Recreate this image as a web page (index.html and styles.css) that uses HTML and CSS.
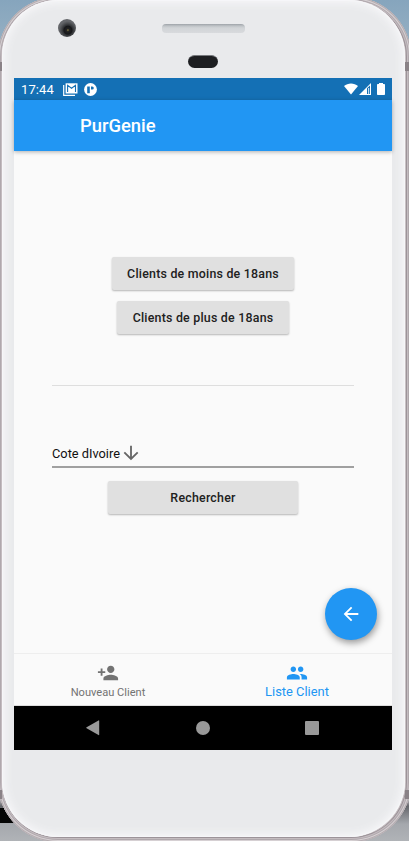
FILE: index.html
```html
<!DOCTYPE html>
<html lang="fr">
<head>
<meta charset="utf-8">
<title>PurGenie</title>
<link rel="stylesheet" href="styles.css">
</head>
<body>
<div class="backdrop"></div>
<div class="casing">
  <i class="band band-tl"></i><i class="band band-tr"></i><i class="band band-bl"></i><i class="band band-br"></i>
  <div class="face">
    <div class="bezel">
      <span class="camera"></span>
      <span class="speaker"></span>
      <span class="sensor"></span>
    </div>
    <div class="screen">
      <div class="status">
        <span class="time">17:44</span>
        <svg class="gmail" width="15" height="13" viewBox="0 0 15 13"><path d="M.7 2v10.300H12" fill="none" stroke="#fff" stroke-width="1.200"/><path fill="#fff" d="M2.600.3h11.900v10.200H2.600z"/><path d="M4.600 9V2.300l3.950 3 3.950-3V9" fill="none" stroke="#1470b5" stroke-width="1.100"/></svg>
        <svg class="app" width="13" height="13" viewBox="0 0 13 13"><circle cx="6.500" cy="6.500" r="6.400" fill="#fff"/><path fill="#1470b5" d="M3.200 3.500h2.600v6.800H3.200zM7 3.500h1.200q1.600 0 1.600 1.500t-1.600 1.500H7z"/></svg>
        <span class="spacer"></span>
        <svg width="14" height="12" viewBox="0 0 14 12"><path fill="#fff" d="M0 3C3.800-.4 10.200-.4 14 3L7 11.500z"/></svg>
        <svg class="signal" width="12" height="12" viewBox="0 0 12 12"><path fill="#fff" d="M0 12 12 0v12z"/><path fill="#1470b5" d="M8 5.200 11 2.500V11H8z"/><path fill="#c4dcef" d="M9 5h1.200v6H9z"/></svg>
        <svg class="battery" width="8" height="12" viewBox="0 0 8 12"><path fill="#fff" d="M2 0h4v1h1.200q.8 0 .8.8v9.400q0 .8-.8.8H.8q-.8 0-.8-.8V1.800q0-.8.8-.8H2z"/></svg>
      </div>
      <header class="appbar">PurGenie</header>
      <main class="content">
        <button class="btn young">Clients de moins de 18ans</button>
        <button class="btn adult">Clients de plus de 18ans</button>
        <hr class="divider">
        <div class="select">
          <span>Cote dIvoire</span>
          <svg width="22" height="22" viewBox="0 0 24 24"><path fill="#666" d="M20 12l-1.410-1.410L13 16.170V4h-2v12.170l-5.580-5.590L4 12l8 8z"/></svg>
        </div>
        <button class="btn search">Rechercher</button>
        <button class="fab"><svg width="22" height="22" viewBox="0 0 24 24"><path fill="#fff" d="M20 11H7.830l5.590-5.590L12 4l-8 8 8 8 1.410-1.410L7.830 13H20z"/></svg></button>
      </main>
      <nav class="tabs">
        <div class="tab">
          <svg width="22" height="22" viewBox="0 0 24 24"><path fill="#737373" d="M15 12c2.210 0 4-1.790 4-4s-1.790-4-4-4-4 1.790-4 4 1.790 4 4 4zm-9-2V7H4v3H1v2h3v3h2v-3h3v-2zm9 4c-2.670 0-8 1.340-8 4v2h16v-2c0-2.660-5.330-4-8-4z"/></svg>
          <span>Nouveau Client</span>
        </div>
        <div class="tab active">
          <svg width="22" height="22" viewBox="0 0 24 24"><path fill="#2196f3" d="M16 11c1.660 0 2.990-1.340 2.990-3S17.660 5 16 5s-3 1.340-3 3 1.340 3 3 3zm-8 0c1.660 0 2.990-1.340 2.990-3S9.660 5 8 5 5 6.340 5 8s1.340 3 3 3zm0 2c-2.330 0-7 1.170-7 3.500V19h14v-2.500C15 14.170 10.330 13 8 13zm8 0c-.29 0-.62.020-.97.050C16.190 13.890 17 15.020 17 16.500V19h6v-2.500c0-2.330-4.670-3.500-7-3.500z"/></svg>
          <span>Liste Client</span>
        </div>
      </nav>
      <div class="sysnav">
        <svg width="14" height="16" viewBox="0 0 14 16"><path fill="#999" d="M.6 7.300 12.500.4q.7-.4.7.3v14q0 .7-.7.3L.6 8.300q-.8-.5 0-1z"/></svg>
        <span class="home"></span>
        <span class="recent"></span>
      </div>
    </div>
  </div>
</div>
</body>
</html>
```
FILE: styles.css
```css
* { box-sizing: border-box; }
body {
  margin: 0;
  width: 409px;
  height: 841px;
  overflow: hidden;
  position: relative;
  font-family: Roboto, sans-serif;
}
.backdrop {
  position: absolute;
  inset: 0;
  background: linear-gradient(#86a5bd 0, #96b0c3 45px, #b8b3b8 60px, #b8b3b8 800px, #65666b 806px, #a5a8ad 824px, #b0b3b7 841px);
}
.backdrop::before {
  content: "";
  position: absolute;
  left: 0;
  top: 808px;
  width: 20px;
  height: 15px;
  background: #050505;
}
.casing {
  position: absolute;
  left: -2px;
  top: -3px;
  width: 413px;
  height: 845px;
  padding: 3px 6px 5px 4px;
  border-radius: 60px;
  background: #c8c1c4;
  box-shadow: inset 0 0 0 1px #b5adb1, inset 0 0 0 2px #d6d0d3, inset 0 0 0 3px #b0a8ad, inset 0 0 0 4px #c4bcc0, inset 0 0 0 5px #9c9399;
}
.face {
  height: 100%;
  padding-left: 12px;
  border-radius: 56px;
  background: #e9eaec;
  box-shadow: inset 0 0 9px 3px #f7f7f9, inset 0 0 0 1px #f4f4f6;
}
.band {
  position: absolute;
  width: 6px;
  height: 9px;
  background: #8a8287;
}
.band-tl { left: 0; top: 65px; width: 4px; }
.band-tr { right: 0; top: 65px; }
.band-bl { left: 0; top: 793px; width: 4px; }
.band-br { right: 0; top: 793px; }
.bezel {
  position: relative;
  width: 378px;
  height: 78px;
}
.camera, .speaker, .sensor { position: absolute; }
.camera {
  left: 44px;
  top: 19px;
  width: 18px;
  height: 18px;
  border-radius: 50%;
  background: radial-gradient(circle at 55% 62%, #857b43 0, #222 1.500px, #16171a 4px, #303235 5px, #4c4e51 7px, #64666a 9px);
}
.speaker {
  left: 148px;
  top: 24px;
  width: 83px;
  height: 9px;
  border-radius: 4px;
  background: linear-gradient(#9da2a8 0, #bfc3c7 2px, #d1d4d7 4px, #d8dadd 9px);
}
.sensor {
  left: 174px;
  top: 55px;
  width: 30px;
  height: 13px;
  border-radius: 7px;
  background: #1d1e21;
  border-top: 1px solid #77797d;
}
.screen {
  width: 378px;
  height: 672px;
  display: flex;
  flex-direction: column;
  background: #fafafa;
}
.status {
  height: 22px;
  display: flex;
  align-items: center;
  padding: 0 7px;
  background: #1470b5;
  color: #fff;
}
.time { font-size: 13px; width: 42px; letter-spacing: .1px; }
.app { margin-left: 6px; }
.spacer { flex: 1; }
.signal { margin-left: 1px; }
.battery { margin-left: 6px; }
.appbar {
  height: 51px;
  padding-left: 66px;
  line-height: 52px;
  font-size: 18.400px;
  font-weight: 500;
  color: #fff;
  background: #2196f3;
  box-shadow: 0 1px 4px rgba(0, 0, 0, .3);
  z-index: 1;
}
.content {
  flex: 1;
  position: relative;
  display: flex;
  flex-direction: column;
  align-items: center;
  padding: 106px 38px 0;
}
.btn {
  height: 33px;
  border: 0;
  padding: 0;
  border-radius: 2px;
  background: #e0e0e0;
  color: #212121;
  font: 500 12.400px Roboto, sans-serif;
  letter-spacing: .22px;
  white-space: nowrap;
  box-shadow: 0 1px 2px rgba(0, 0, 0, .28);
}
.young { width: 182px; }
.adult { width: 172px; margin-top: 11px; }
.divider {
  width: 302px;
  height: 1px;
  margin: 51px 0 0;
  border: 0;
  background: #dedede;
}
.select {
  width: 302px;
  height: 28px;
  margin-top: 54px;
  display: flex;
  align-items: center;
  border-bottom: 2px solid #a0a0a0;
  font-size: 12.800px;
  color: #111;
}
.search { width: 190px; margin-top: 13px; }
.fab {
  position: absolute;
  right: 15px;
  bottom: 13px;
  width: 52px;
  height: 52px;
  padding: 0;
  border: 0;
  border-radius: 50%;
  display: grid;
  place-items: center;
  background: #2196f3;
  box-shadow: 1px 3px 7px rgba(0, 0, 0, .4);
}
.tabs {
  height: 53px;
  display: flex;
  border-top: 1px solid #eee;
  border-bottom: 1px solid #ddd;
}
.tab {
  flex: 1;
  display: flex;
  flex-direction: column;
  align-items: center;
  padding: 8px 1px 0 0;
  font-size: 11.100px;
  line-height: 17px;
  color: #737373;
}
.active { font-size: 12.900px; line-height: 15px; color: #2196f3; }
.sysnav {
  height: 44px;
  display: flex;
  align-items: center;
  padding-left: 72px;
  background: #000;
}
.home { width: 14px; height: 14px; margin-left: 96px; border-radius: 50%; background: #999; }
.recent { width: 14px; height: 14px; margin-left: 95px; border-radius: 1px; background: #999; }
```
